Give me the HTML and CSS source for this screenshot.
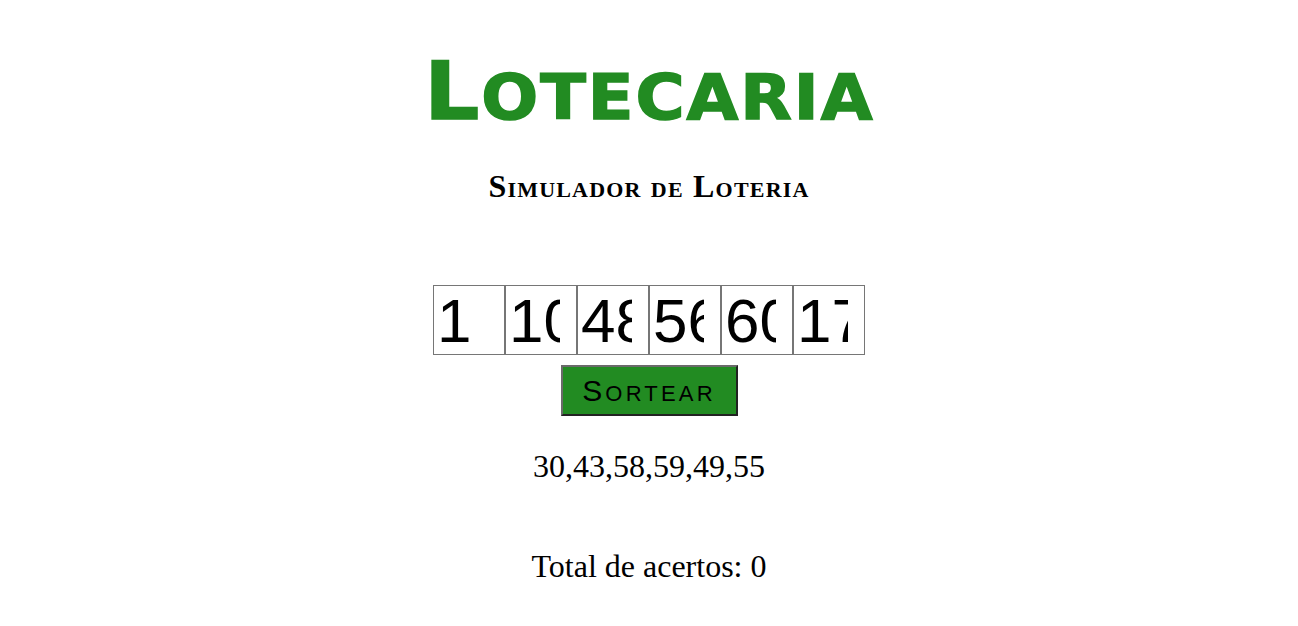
FILE: index.html
```html
<!DOCTYPE html>
<html lang="pt">
<head>
<meta charset="utf-8">
<title>Lotecaria</title>
<link rel="stylesheet" href="styles.css">
</head>
<body>
<main class="page">
  <h1 class="title">Lotecaria</h1>
  <h2 class="subtitle">Simulador de Loteria</h2>
  <div class="picks">
    <input class="pick" type="text" value="1">
    <input class="pick" type="text" value="10">
    <input class="pick" type="text" value="48">
    <input class="pick" type="text" value="56">
    <input class="pick" type="text" value="60">
    <input class="pick" type="text" value="17">
  </div>
  <button class="draw" type="button">Sortear</button>
  <p class="drawn">30,43,58,59,49,55</p>
  <p class="hits">Total de acertos: 0</p>
</main>
</body>
</html>
```

FILE: styles.css
```css
html, body {
  margin: 0;
  padding: 0;
  background: #ffffff;
}

body {
  font-family: "Liberation Serif", "Times New Roman", serif;
  color: #000000;
}

.page {
  display: flex;
  flex-direction: column;
  align-items: center;
  padding-top: 52px;
}

.title {
  margin: 0;
  font-family: "DejaVu Sans", Verdana, sans-serif;
  font-weight: bold;
  font-size: 62px;
  line-height: 80px;
  text-transform: uppercase;
  letter-spacing: 1.8px;
  color: #228b22;
  -webkit-text-stroke: 1.5px #228b22;
  transform: scaleX(1.08);
}

.title::first-letter {
  font-size: 80px;
}

.subtitle {
  margin: 30px 0 0;
  font-family: "Liberation Serif", "Times New Roman", serif;
  font-weight: bold;
  font-size: 32px;
  line-height: normal;
  font-variant: small-caps;
  letter-spacing: 1.2px;
}

.picks {
  display: flex;
  margin-top: 80px;
}

.pick {
  box-sizing: border-box;
  width: 72px;
  height: 70px;
  margin: 0;
  padding: 1px 16px 1px 3px;
  border: 1px solid #767676;
  border-radius: 0;
  background: #ffffff;
  font-family: "Liberation Sans", Arial, sans-serif;
  font-size: 62px;
  color: #000000;
  outline: none;
}

.draw {
  box-sizing: border-box;
  width: 177px;
  height: 51px;
  margin-top: 10px;
  padding: 0;
  border-style: solid;
  border-width: 2px;
  border-color: #6a6a6a #222222 #222222 #6a6a6a;
  background: #228b22;
  color: #000000;
  font-family: "Liberation Sans", Arial, sans-serif;
  font-size: 22px;
  text-transform: uppercase;
  letter-spacing: 3.2px;
  cursor: pointer;
}

.draw::first-letter {
  font-size: 30px;
}

.drawn {
  margin: 32px 0 0;
  font-size: 32px;
  line-height: normal;
}

.hits {
  margin: 63px 0 0;
  font-size: 32px;
  line-height: normal;
}
```
